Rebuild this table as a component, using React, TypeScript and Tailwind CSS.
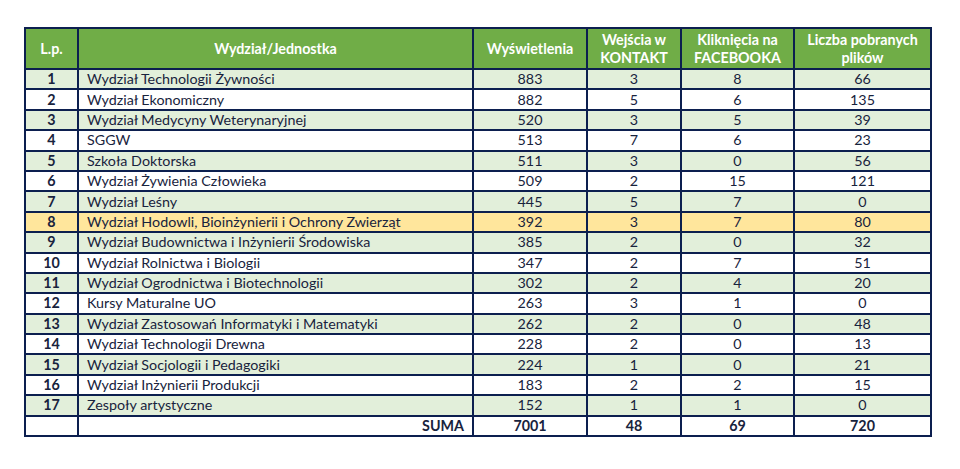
import React from 'react';

type Row = [number, string, number, number, number, number];

const rows: Row[] = [
  [1, 'Wydział Technologii Żywności', 883, 3, 8, 66],
  [2, 'Wydział Ekonomiczny', 882, 5, 6, 135],
  [3, 'Wydział Medycyny Weterynaryjnej', 520, 3, 5, 39],
  [4, 'SGGW', 513, 7, 6, 23],
  [5, 'Szkoła Doktorska', 511, 3, 0, 56],
  [6, 'Wydział Żywienia Człowieka', 509, 2, 15, 121],
  [7, 'Wydział Leśny', 445, 5, 7, 0],
  [8, 'Wydział Hodowli, Bioinżynierii i Ochrony Zwierząt', 392, 3, 7, 80],
  [9, 'Wydział Budownictwa i Inżynierii Środowiska', 385, 2, 0, 32],
  [10, 'Wydział Rolnictwa i Biologii', 347, 2, 7, 51],
  [11, 'Wydział Ogrodnictwa i Biotechnologii', 302, 2, 4, 20],
  [12, 'Kursy Maturalne UO', 263, 3, 1, 0],
  [13, 'Wydział Zastosowań Informatyki i Matematyki', 262, 2, 0, 48],
  [14, 'Wydział Technologii Drewna', 228, 2, 0, 13],
  [15, 'Wydział Socjologii i Pedagogiki', 224, 1, 0, 21],
  [16, 'Wydział Inżynierii Produkcji', 183, 2, 2, 15],
  [17, 'Zespoły artystyczne', 152, 1, 1, 0],
];

const cell = 'border-2 border-[#0c1f4f] p-0';

const rowBg = (lp: number) => {
  if (lp === 8) return 'bg-[#ffe69c]';
  return lp % 2 === 1 ? 'bg-[#e2efda]' : 'bg-white';
};

const App: React.FC = () => {
  return (
    <div className="w-[960px] h-[469px] bg-white pt-[27px] pl-[24px] font-['Lato','Open_Sans',sans-serif] text-[#18233d]">
      <table className="border-collapse table-fixed w-[906px] text-[14.3px] leading-[16px]">
        <colgroup>
          <col className="w-[53px]" />
          <col className="w-[395px]" />
          <col className="w-[114px]" />
          <col className="w-[94px]" />
          <col className="w-[113px]" />
          <col className="w-[137px]" />
        </colgroup>
        <thead>
          <tr className="h-[41px] bg-[#70ad47] text-white font-bold text-[14.3px] leading-[18px]">
            <th className={cell}>L.p.</th>
            <th className={cell}>Wydział/Jednostka</th>
            <th className={cell}>Wyświetlenia</th>
            <th className={cell}>
              Wejścia w<br />KONTAKT
            </th>
            <th className={cell}>
              Kliknięcia na<br />FACEBOOKA
            </th>
            <th className={cell}>
              Liczba pobranych<br />plików
            </th>
          </tr>
        </thead>
        <tbody>
          {rows.map(([lp, name, views, contact, fb, files]) => (
            <tr key={lp} className={`h-[20.4px] ${rowBg(lp)}`}>
              <td className={`${cell} text-center font-bold`}>{lp}</td>
              <td className={`${cell} pl-[8px]`}>{name}</td>
              <td className={`${cell} text-center`}>{views}</td>
              <td className={`${cell} text-center`}>{contact}</td>
              <td className={`${cell} text-center`}>{fb}</td>
              <td className={`${cell} text-center`}>{files}</td>
            </tr>
          ))}
          <tr className="h-[20.4px] bg-white font-bold">
            <td className={cell}></td>
            <td className={`${cell} text-right pr-[8px]`}>SUMA</td>
            <td className={`${cell} text-center`}>7001</td>
            <td className={`${cell} text-center`}>48</td>
            <td className={`${cell} text-center`}>69</td>
            <td className={`${cell} text-center`}>720</td>
          </tr>
        </tbody>
      </table>
    </div>
  );
};

export default App;
